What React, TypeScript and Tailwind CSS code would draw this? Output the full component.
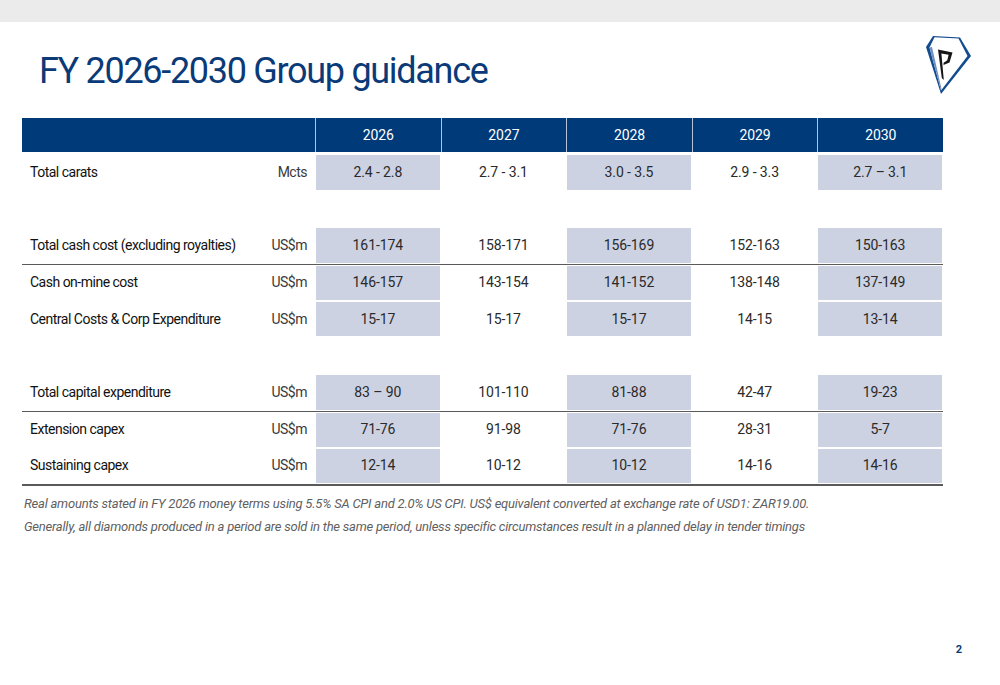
const FONT = { fontFamily: "Roboto, 'Liberation Sans', sans-serif" };

type Row =
  | { kind: "blank" }
  | {
      kind: "data";
      label: string;
      unit: string;
      values: string[];
      ruleAbove?: boolean;
    };

const YEARS = ["2026", "2027", "2028", "2029", "2030"];

const ROWS: Row[] = [
  { kind: "data", label: "Total carats", unit: "Mcts", values: ["2.4 - 2.8", "2.7 - 3.1", "3.0 -  3.5", "2.9 - 3.3", "2.7 – 3.1"] },
  { kind: "blank" },
  { kind: "data", label: "Total cash cost (excluding royalties)", unit: "US$m", values: ["161-174", "158-171", "156-169", "152-163", "150-163"] },
  { kind: "data", label: "Cash on-mine cost", unit: "US$m", values: ["146-157", "143-154", "141-152", "138-148", "137-149"], ruleAbove: true },
  { kind: "data", label: "Central Costs & Corp Expenditure", unit: "US$m", values: ["15-17", "15-17", "15-17", "14-15", "13-14"] },
  { kind: "blank" },
  { kind: "data", label: "Total capital expenditure", unit: "US$m", values: ["83 – 90", "101-110", "81-88", "42-47", "19-23"] },
  { kind: "data", label: "Extension capex", unit: "US$m", values: ["71-76", "91-98", "71-76", "28-31", "5-7"], ruleAbove: true },
  { kind: "data", label: "Sustaining capex", unit: "US$m", values: ["12-14", "10-12", "10-12", "14-16", "14-16"] },
];

// Gem outline with a stylised "P" – coordinates in page pixels from (920, 30).
function Logo() {
  return (
    <svg width="56" height="66" viewBox="0 0 56 66" aria-hidden>
      <polygon points="13,6 40,7.5 51,26 21,64 6,17" fill="#124b8e" />
      <polygon points="14.5,7.2 38.5,8.6 47.5,26 21,60.5 9.5,17.5" fill="#ffffff" />
      <polygon points="9.5,17.5 12,17 21.5,59 21,60.5" fill="#6f8fbf" />
      <path
        d="M18 19.5 L32.5 22.5 L29.5 32.5 L23.5 35 L23.6 32.8 L27.3 30.3 L28.6 24.8 L21.4 23.6 L23.8 50 L21.8 48 Z"
        fill="#161616"
      />
    </svg>
  );
}

function YearCell({ value, shaded }: { value: string; shaded: boolean }) {
  return (
    <div className="flex-1 px-[1px] py-[1px]">
      <div
        className={[
          "flex h-full items-center justify-center text-[14px] text-[#2a2a2a] tracking-[-0.1px]",
          shaded ? "bg-[#cdd2e3]" : "",
        ].join(" ")}
      >
        {value}
      </div>
    </div>
  );
}

export default function App() {
  return (
    <div className="flex h-[685px] w-[1000px] flex-col bg-white" style={FONT}>
      <div className="h-[22px] shrink-0 bg-[#ebebeb]" />

      <div className="flex h-[96px] shrink-0 items-start justify-between pl-[39px] pr-[24px]">
        <h1 className="mt-[27px] text-[36px] leading-[44px] tracking-[-1.3px] text-[#0b3a78]">
          FY 2026-2030 Group guidance
        </h1>
        <div className="mt-[8px]">
          <Logo />
        </div>
      </div>

      <div className="mx-[22px] w-[921px]">
        <div className="flex h-[34px] bg-[#003a78] text-[14px] text-white">
          <div className="w-[293px]" />
          {YEARS.map((y) => (
            <div
              key={y}
              className="flex flex-1 items-center justify-center border-l border-[#b9c3d8] tracking-[-0.1px]"
            >
              {y}
            </div>
          ))}
        </div>
        <div className="h-[2px]" />

        {ROWS.map((row, i) =>
          row.kind === "blank" ? (
            <div key={i} className="h-[36.7px]" />
          ) : (
            <div
              key={i}
              className={[
                "flex h-[36.7px]",
                row.ruleAbove ? "border-t-[1.5px] border-[#5a5a5a]" : "",
              ].join(" ")}
            >
              <div className="flex w-[293px] items-center justify-between pl-[8px] pr-[8px] text-[14px] tracking-[-0.5px]">
                <span className="text-[#111111]">{row.label}</span>
                <span className="text-[#3a3a3a]">{row.unit}</span>
              </div>
              {row.values.map((v, j) => (
                <YearCell key={j} value={v} shaded={j % 2 === 0} />
              ))}
            </div>
          ),
        )}
        <div className="h-[1.5px] bg-[#5a5a5a]" />
      </div>

      <div className="mt-[6px] pl-[24px] text-[13px] italic leading-[23px] tracking-[-0.22px] text-[#5f5f5f]">
        <p>
          Real amounts stated in FY 2026 money terms using 5.5% SA CPI and 2.0% US CPI. US$
          equivalent converted at exchange rate of USD1: ZAR19.00.
        </p>
        <p>
          Generally, all diamonds produced in a period are sold in the same period, unless specific
          circumstances result in a planned delay in tender timings
        </p>
      </div>

      <div className="flex flex-1 items-end justify-end pb-[27px] pr-[38px]">
        <span className="text-[11px] font-bold text-[#0b3a78]">2</span>
      </div>
    </div>
  );
}
